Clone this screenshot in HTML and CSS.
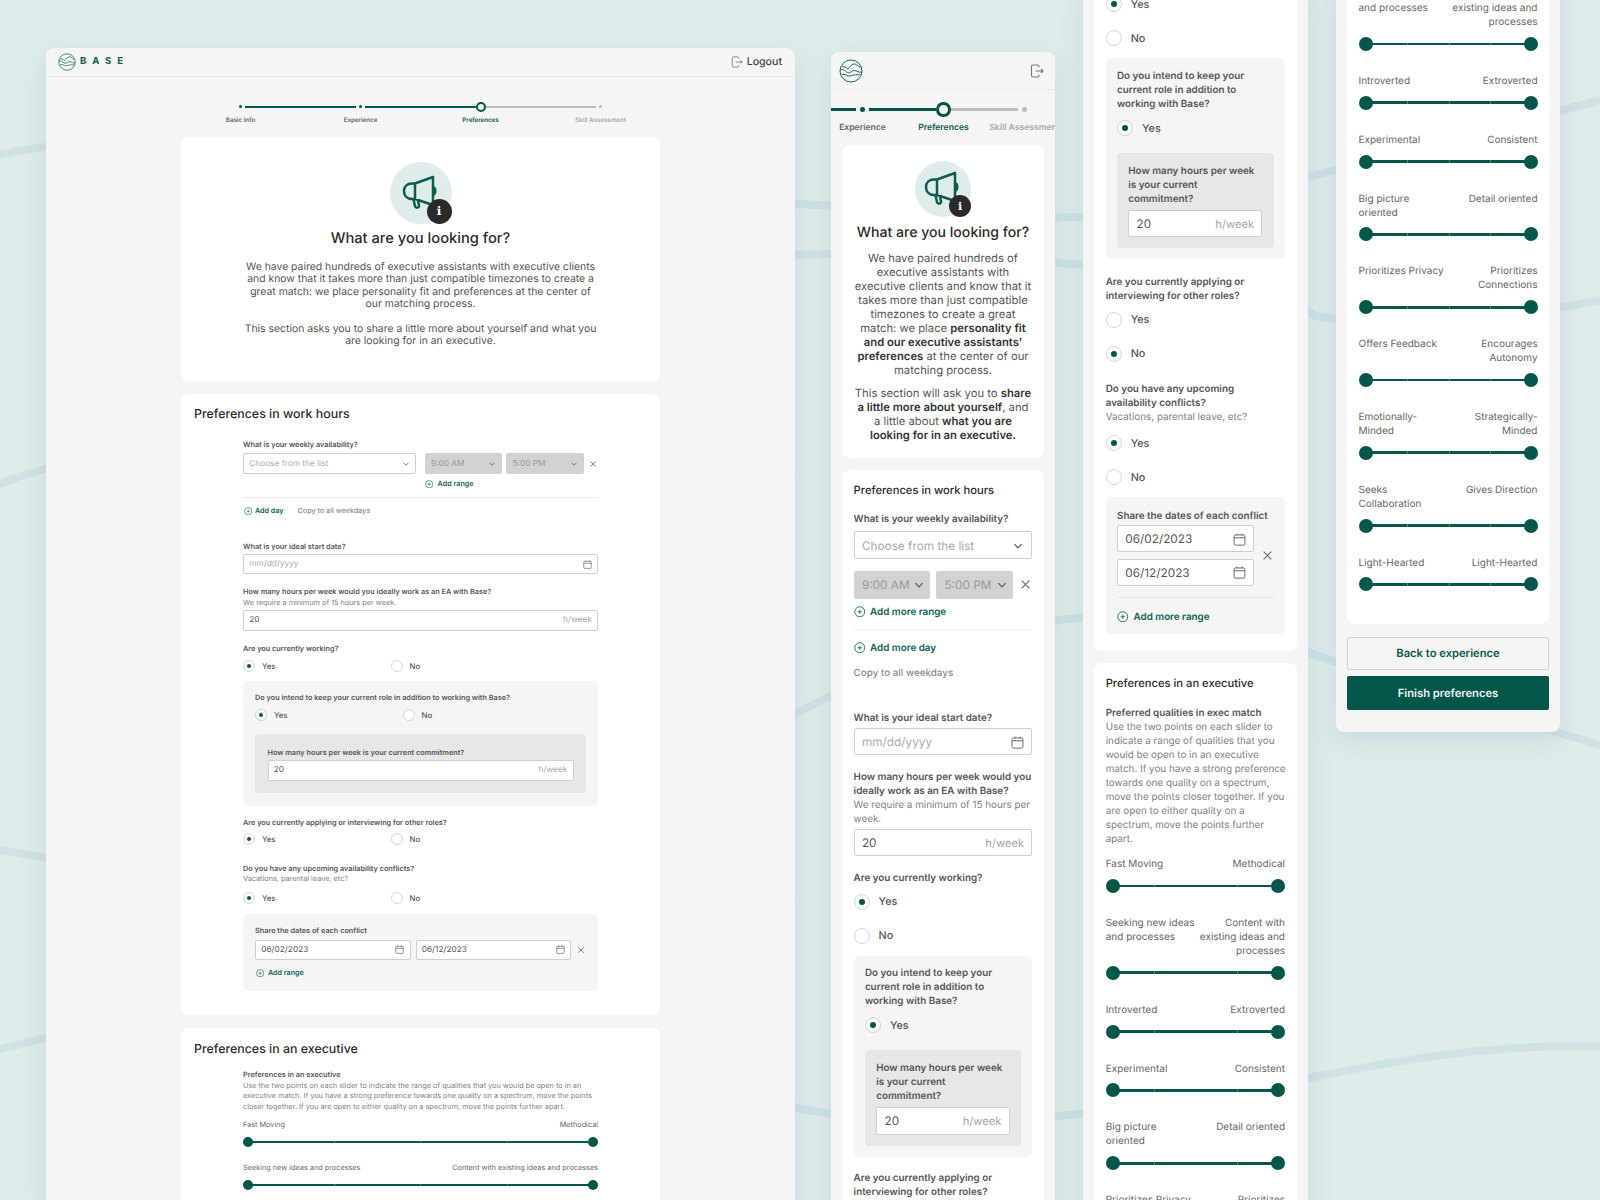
FILE: index.html
```html
<!DOCTYPE html>
<html lang="en">
<head>
<meta charset="utf-8">
<title>Base – Preferences</title>
<link rel="stylesheet" href="styles.css">
</head>
<body>
<svg class="sprite" xmlns="http://www.w3.org/2000/svg">
  <symbol id="i-chev" viewBox="0 0 10 10"><path d="M2 3.5 5 6.5 8 3.5"/></symbol>
  <symbol id="i-x" viewBox="0 0 10 10"><path d="M1.5 1.5 8.500 8.500M8.500 1.500 1.500 8.500"/></symbol>
  <symbol id="i-cal" viewBox="0 0 12 12"><rect x="1" y="1.800" width="10" height="9.400" rx="1.300"/><path d="M1 4.400H11M3.500.6V2M8.500.6V2"/></symbol>
  <symbol id="i-add" viewBox="0 0 12 12"><circle cx="6" cy="6" r="5.200"/><path d="M6 3.800V8.200M3.800 6H8.200"/></symbol>
  <symbol id="i-out" viewBox="0 0 14 14"><path d="M9 3.200V2.500A1.500 1.500 0 0 0 7.500 1H3A1.500 1.500 0 0 0 1.500 2.500V11.500A1.500 1.500 0 0 0 3 13H7.500A1.500 1.500 0 0 0 9 11.500V10.800M5.500 7H13M11 5 13 7 11 9"/></symbol>
  <symbol id="i-logo" viewBox="0 0 24 24"><circle cx="12" cy="12" r="11"/><path d="M3 8C6 7 7.500 9 9 10C11 8 13 4.500 16 5C18 5.500 19 7.500 21.500 8.500M1.300 11C4 9.500 6 12 8.500 13.500C11 15 12.500 11.500 15 11.500C18 11.500 20 14 22.700 13M2.500 16C6 14 8 17.500 11 17C14 16.500 16 15 21.500 16"/></symbol>
  <symbol id="i-horn" viewBox="0 0 62 62"><path d="M25 21.500 43 15V43L25 37H22C17 37 14 33.500 14 29S17 21.500 22 21.500ZM25 21.500V37M23.500 37.500 25 44C25.500 46.500 29.500 46 29 43.500L28 38.500M43 25C46 26 46 32 43 33"/></symbol>
</svg>

<div class="stage">
  <svg class="waves" viewBox="0 0 1600 1200" xmlns="http://www.w3.org/2000/svg">
    <path d="M-10 157C300 90 600 195 795 204C900 208 980 220 1083 217C1200 210 1300 180 1600 100"/>
    <path d="M795 255C900 250 1000 258 1083 265C1200 275 1300 300 1315 316C1400 330 1500 320 1600 300"/>
    <path d="M-10 488C100 440 300 420 795 480"/>
    <path d="M-10 848 46 858C300 960 600 960 795 900"/>
    <path d="M-10 1052C40 1040 200 990 400 1000"/>
    <path d="M780 722C840 690 960 625 1083 618C1180 614 1260 635 1336 662C1420 695 1500 715 1610 748"/>
    <path d="M780 1105C900 1130 1050 1130 1308 1078C1400 1060 1500 1042 1610 1047"/>
  </svg>

  <section class="window win1 lg">
    <header class="topbar">
      <div class="brand"><svg class="ic logo"><use href="#i-logo"/></svg><span class="wordmark">BASE</span></div>
      <div class="logout"><svg class="ic"><use href="#i-out"/></svg>Logout</div>
    </header>
    <div class="steps">
      <div class="step done"><div class="rail"><i class="seg none"></i><i class="pt"></i><i class="seg on"></i></div><span>Basic Info</span></div>
      <div class="step done"><div class="rail"><i class="seg on"></i><i class="pt"></i><i class="seg on"></i></div><span>Experience</span></div>
      <div class="step now"><div class="rail"><i class="seg on"></i><i class="pt"></i><i class="seg off"></i></div><span>Preferences</span></div>
      <div class="step todo"><div class="rail"><i class="seg off"></i><i class="pt"></i><i class="seg none"></i></div><span>Skill Assessment</span></div>
    </div>

    <div class="card intro">
      <div class="horn"><svg class="ic"><use href="#i-horn"/></svg><b class="badge">i</b></div>
      <h1>What are you looking for?</h1>
      <p>We have paired hundreds of executive assistants with executive clients and know that it takes more than just compatible timezones to create a great match: we place personality fit and preferences at the center of our matching process.</p>
      <p class="para2">This section asks you to share a little more about yourself and what you are looking for in an executive.</p>
    </div>

    <div class="card work">
      <h2>Preferences in work hours</h2>
      <div class="form">
        <div class="label t18">What is your weekly availability?</div>
        <div class="avail t3">
          <div class="ctl muted pick">Choose from the list<svg class="ic"><use href="#i-chev"/></svg></div>
          <div class="ctl time">9:00 AM<svg class="ic"><use href="#i-chev"/></svg></div>
          <div class="ctl time">5:00 PM<svg class="ic"><use href="#i-chev"/></svg></div>
          <svg class="ic close"><use href="#i-x"/></svg>
        </div>
        <div class="action t5 under-time"><svg class="ic"><use href="#i-add"/></svg>Add range</div>
        <div class="rule t8"></div>
        <div class="inline t8">
          <div class="action"><svg class="ic"><use href="#i-add"/></svg>Add day</div>
          <div class="copy">Copy to all weekdays</div>
        </div>
        <div class="label t25">What is your ideal start date?</div>
        <div class="ctl muted t2">mm/dd/yyyy<svg class="ic cal"><use href="#i-cal"/></svg></div>
        <div class="label t13">How many hours per week would you ideally work as an EA with Base?<div class="sub">We require a minimum of 15 hours per week.</div></div>
        <div class="ctl t2">20<span class="unit">h/week</span></div>
        <div class="label t13">Are you currently working?</div>
        <div class="radios t5h">
          <div class="radio"><i class="mark on"></i>Yes</div>
          <div class="radio"><i class="mark"></i>No</div>
        </div>
        <div class="panel t9h">
          <div class="label">Do you intend to keep your current role in addition to working with Base?</div>
          <div class="radios t5h">
            <div class="radio"><i class="mark on"></i>Yes</div>
            <div class="radio"><i class="mark"></i>No</div>
          </div>
          <div class="inner t13">
            <div class="label">How many hours per week is your current commitment?</div>
            <div class="ctl t2">20<span class="unit">h/week</span></div>
          </div>
        </div>
        <div class="label t12h">Are you currently applying or interviewing for other roles?</div>
        <div class="radios t5">
          <div class="radio"><i class="mark on"></i>Yes</div>
          <div class="radio"><i class="mark"></i>No</div>
        </div>
        <div class="label t18h">Do you have any upcoming availability conflicts?<div class="sub">Vacations, parental leave, etc?</div></div>
        <div class="radios t7h">
          <div class="radio"><i class="mark on"></i>Yes</div>
          <div class="radio"><i class="mark"></i>No</div>
        </div>
        <div class="panel t9h">
          <div class="label">Share the dates of each conflict</div>
          <div class="dates t3">
            <div class="ctl">06/02/2023<svg class="ic cal"><use href="#i-cal"/></svg></div>
            <div class="ctl">06/12/2023<svg class="ic cal"><use href="#i-cal"/></svg></div>
            <svg class="ic close"><use href="#i-x"/></svg>
          </div>
          <div class="action t8h"><svg class="ic"><use href="#i-add"/></svg>Add range</div>
        </div>
      </div>
    </div>

    <div class="card exec">
      <h2>Preferences in an executive</h2>
      <div class="form">
        <div class="label t13">Preferences in an executive<div class="sub">Use the two points on each slider to indicate the range of qualities that you would be open to in an executive match. If you have a strong preference towards one quality on a spectrum, move the points closer together. If you are open to either quality on a spectrum, move the points further apart.</div></div>
        <div class="scale first">
          <div class="ends"><span>Fast Moving</span><span>Methodical</span></div>
          <div class="slider"><i class="thumb"></i><i class="track"></i><i class="thumb"></i></div>
        </div>
        <div class="scale">
          <div class="ends"><span>Seeking new ideas and processes</span><span>Content with existing ideas and processes</span></div>
          <div class="slider"><i class="thumb"></i><i class="track"></i><i class="thumb"></i></div>
        </div>
      </div>
    </div>
  </section>

  <section class="window win2 sm">
    <header class="topbar">
      <svg class="ic logo"><use href="#i-logo"/></svg>
      <svg class="ic exit"><use href="#i-out"/></svg>
    </header>
    <div class="steps">
      <div class="step done"><div class="rail"><i class="seg none"></i><i class="pt"></i><i class="seg on"></i></div><span>Basic Info</span></div>
      <div class="step done"><div class="rail"><i class="seg on"></i><i class="pt"></i><i class="seg on"></i></div><span>Experience</span></div>
      <div class="step now"><div class="rail"><i class="seg on"></i><i class="pt"></i><i class="seg off"></i></div><span>Preferences</span></div>
      <div class="step todo"><div class="rail"><i class="seg off"></i><i class="pt"></i><i class="seg none"></i></div><span>Skill Assessment</span></div>
    </div>
    <div class="card intro">
      <div class="horn"><svg class="ic"><use href="#i-horn"/></svg><b class="badge">i</b></div>
      <h1>What are you looking for?</h1>
      <p>We have paired hundreds of<br>executive assistants with<br>executive clients and know that it<br>takes more than just compatible<br>timezones to create a great<br>match: we place <b>personality fit<br>and our executive assistants’<br>preferences</b> at the center of our<br>matching process.</p>
      <p class="para2">This section will ask you to <b>share<br>a little more about yourself</b>, and<br>a little about <b>what you are<br>looking for in an executive.</b></p>
    </div>
    <div class="card work">
      <h2>Preferences in work hours</h2>
      <div class="label t14">What is your weekly availability?</div>
      <div class="ctl muted t5h">Choose from the list<svg class="ic"><use href="#i-chev"/></svg></div>
      <div class="times t12h">
        <div class="ctl time">9:00 AM<svg class="ic"><use href="#i-chev"/></svg></div>
        <div class="ctl time">5:00 PM<svg class="ic"><use href="#i-chev"/></svg></div>
        <svg class="ic close"><use href="#i-x"/></svg>
      </div>
      <div class="action t6"><svg class="ic"><use href="#i-add"/></svg>Add more range</div>
      <div class="rule t10"></div>
      <div class="action t11h"><svg class="ic"><use href="#i-add"/></svg>Add more day</div>
      <div class="copy t11">Copy to all weekdays</div>
      <div class="label t31">What is your ideal start date?</div>
      <div class="ctl muted t3">mm/dd/yyyy<svg class="ic cal"><use href="#i-cal"/></svg></div>
      <div class="label t14h">How many hours per week would you<br>ideally work as an EA with Base?<div class="sub">We require a minimum of 15 hours per<br>week.</div></div>
      <div class="ctl t3">20<span class="unit">h/week</span></div>
      <div class="label t14h">Are you currently working?</div>
      <div class="radios t9">
        <div class="radio"><i class="mark on"></i>Yes</div>
        <div class="radio"><i class="mark"></i>No</div>
      </div>
      <div class="panel t12">
        <div class="label">Do you intend to keep your<br>current role in addition to<br>working with Base?</div>
        <div class="radios t9"><div class="radio"><i class="mark on"></i>Yes</div></div>
        <div class="inner t17">
          <div class="label">How many hours per week<br>is your current<br>commitment?</div>
          <div class="ctl t4">20<span class="unit">h/week</span></div>
        </div>
      </div>
      <div class="label t14h">Are you currently applying or<br>interviewing for other roles?</div>
    </div>
  </section>

  <section class="window win3 sm">
    <div class="card work head-less">
      <div class="radios">
        <div class="radio"><i class="mark on"></i>Yes</div>
        <div class="radio"><i class="mark"></i>No</div>
      </div>
      <div class="panel t12">
        <div class="label">Do you intend to keep your<br>current role in addition to<br>working with Base?</div>
        <div class="radios t9"><div class="radio"><i class="mark on"></i>Yes</div></div>
        <div class="inner t17">
          <div class="label">How many hours per week<br>is your current<br>commitment?</div>
          <div class="ctl t4">20<span class="unit">h/week</span></div>
        </div>
      </div>
      <div class="label t16">Are you currently applying or<br>interviewing for other roles?</div>
      <div class="radios t8h">
        <div class="radio"><i class="mark"></i>Yes</div>
        <div class="radio"><i class="mark on"></i>No</div>
      </div>
      <div class="label t20">Do you have any upcoming<br>availability conflicts?<div class="sub">Vacations, parental leave, etc?</div></div>
      <div class="radios t11h">
        <div class="radio"><i class="mark on"></i>Yes</div>
        <div class="radio"><i class="mark"></i>No</div>
      </div>
      <div class="panel t12 dates-panel">
        <div class="label">Share the dates of each conflict</div>
        <div class="dates t2h">
          <div class="stack">
            <div class="ctl">06/02/2023<svg class="ic cal"><use href="#i-cal"/></svg></div>
            <div class="ctl">06/12/2023<svg class="ic cal"><use href="#i-cal"/></svg></div>
          </div>
          <svg class="ic close"><use href="#i-x"/></svg>
        </div>
        <div class="rule t11"></div>
        <div class="action t11h"><svg class="ic"><use href="#i-add"/></svg>Add more range</div>
      </div>
    </div>
    <div class="card exec">
      <h2>Preferences in an executive</h2>
      <div class="label t15">Preferred qualities in exec match<div class="sub">Use the two points on each slider to<br>indicate a range of qualities that you<br>would be open to in an executive<br>match. If you have a strong preference<br>towards one quality on a spectrum,<br>move the points closer together. If you<br>are open to either quality on a<br>spectrum, move the points further<br>apart.</div></div>
      <div class="scale first">
        <div class="ends"><span>Fast Moving</span><span>Methodical</span></div>
        <div class="slider"><i class="thumb"></i><i class="track"></i><i class="thumb"></i></div>
      </div>
      <div class="scale">
        <div class="ends"><span>Seeking new ideas<br>and processes</span><span>Content with<br>existing ideas and<br>processes</span></div>
        <div class="slider"><i class="thumb"></i><i class="track"></i><i class="thumb"></i></div>
      </div>
      <div class="scale">
        <div class="ends"><span>Introverted</span><span>Extroverted</span></div>
        <div class="slider"><i class="thumb"></i><i class="track"></i><i class="thumb"></i></div>
      </div>
      <div class="scale">
        <div class="ends"><span>Experimental</span><span>Consistent</span></div>
        <div class="slider"><i class="thumb"></i><i class="track"></i><i class="thumb"></i></div>
      </div>
      <div class="scale">
        <div class="ends"><span>Big picture<br>oriented</span><span>Detail oriented</span></div>
        <div class="slider"><i class="thumb"></i><i class="track"></i><i class="thumb"></i></div>
      </div>
      <div class="scale">
        <div class="ends"><span>Prioritizes Privacy</span><span>Prioritizes<br>Connections</span></div>
      </div>
    </div>
  </section>

  <section class="window win4 sm">
    <div class="card exec head-less">
      <div class="scale none-top">
        <div class="ends"><span>Seeking new ideas<br>and processes</span><span>Content with<br>existing ideas and<br>processes</span></div>
        <div class="slider"><i class="thumb"></i><i class="track"></i><i class="thumb"></i></div>
      </div>
      <div class="scale">
        <div class="ends"><span>Introverted</span><span>Extroverted</span></div>
        <div class="slider"><i class="thumb"></i><i class="track"></i><i class="thumb"></i></div>
      </div>
      <div class="scale">
        <div class="ends"><span>Experimental</span><span>Consistent</span></div>
        <div class="slider"><i class="thumb"></i><i class="track"></i><i class="thumb"></i></div>
      </div>
      <div class="scale">
        <div class="ends"><span>Big picture<br>oriented</span><span>Detail oriented</span></div>
        <div class="slider"><i class="thumb"></i><i class="track"></i><i class="thumb"></i></div>
      </div>
      <div class="scale">
        <div class="ends"><span>Prioritizes Privacy</span><span>Prioritizes<br>Connections</span></div>
        <div class="slider"><i class="thumb"></i><i class="track"></i><i class="thumb"></i></div>
      </div>
      <div class="scale">
        <div class="ends"><span>Offers Feedback</span><span>Encourages<br>Autonomy</span></div>
        <div class="slider"><i class="thumb"></i><i class="track"></i><i class="thumb"></i></div>
      </div>
      <div class="scale">
        <div class="ends"><span>Emotionally-<br>Minded</span><span>Strategically-<br>Minded</span></div>
        <div class="slider"><i class="thumb"></i><i class="track"></i><i class="thumb"></i></div>
      </div>
      <div class="scale">
        <div class="ends"><span>Seeks<br>Collaboration</span><span>Gives Direction</span></div>
        <div class="slider"><i class="thumb"></i><i class="track"></i><i class="thumb"></i></div>
      </div>
      <div class="scale">
        <div class="ends"><span>Light-Hearted</span><span>Light-Hearted</span></div>
        <div class="slider"><i class="thumb"></i><i class="track"></i><i class="thumb"></i></div>
      </div>
    </div>
    <div class="buttons">
      <div class="btn ghost">Back to experience</div>
      <div class="btn solid">Finish preferences</div>
    </div>
  </section>
</div>
</body>
</html>
```
FILE: styles.css
```css
* { box-sizing: border-box; margin: 0; padding: 0; }
html, body { width: 1600px; height: 1200px; overflow: hidden; }
body { font-family: Inter, "Liberation Sans", sans-serif; color: #555; background: #dfecec; text-rendering: geometricPrecision; }
i { display: block; font-style: normal; }
.sprite { width: 0; height: 0; position: absolute; }
.ic { display: block; fill: none; stroke: currentColor; flex: none; }

.stage { position: relative; width: 1600px; height: 1200px; overflow: hidden; background: #dfecec; }
.waves { position: absolute; inset: 0; width: 1600px; height: 1200px; fill: none; stroke: #cfe3e4; stroke-width: 8; }

.window { position: absolute; background: #f5f5f5; border-radius: 8px 8px 0 0; box-shadow: 0 8px 26px rgba(80, 120, 145, .16); overflow: hidden; }
.win1 { left: 46px; top: 48px; width: 749px; height: 1160px; }
.win2 { left: 831px; top: 52px; width: 224px; height: 1160px; }
.win3 { left: 1083px; top: -20px; width: 224.7px; height: 1240px; }
.win4 { left: 1336px; top: -30px; width: 224px; border-radius: 0 0 8px 8px; }

.lg { --fs: 7.3px; --lh: 10.4px; --ctl: 20.4px; --pad: 5.2px; --mark: 12px; --dot: 4px; --thumb: 10px; --trk: 2px; --add: 8.4px; --chev: 8px; --cal: 9px; --x: 8px; --ctlfs: 8.3px; --addfs: 7.2px; --ends: 7.3px; --unit: 8.3px; }
.sm { --fs: 9.85px; --lh: 14px; --ctl: 27.3px; --pad: 7.3px; --mark: 16px; --dot: 6px; --thumb: 14px; --trk: 2.8px; --add: 11.5px; --chev: 12px; --cal: 13px; --x: 11px; --ctlfs: 11.8px; --addfs: 9.85px; --ends: 10px; --unit: 11.2px; }

/* top bar */
.topbar { display: flex; align-items: center; justify-content: space-between; border-bottom: 1px solid #ececec; }
.lg .topbar { height: 28.7px; padding: 0 13px 0 12px; }
.sm .topbar { height: 38px; padding: 0 11px 0 8px; }
.brand { display: flex; align-items: center; gap: 4px; }
.logo { color: #1a6a5c; stroke-width: 1; }
.lg .logo { width: 18px; height: 18px; }
.sm .logo { width: 24px; height: 24px; }
.wordmark { font-size: 9.5px; font-weight: 700; letter-spacing: 5.9px; color: #0f5c50; line-height: 10px; padding-top: 1px; }
.logout { display: flex; align-items: center; gap: 4px; font-size: 10.6px; font-weight: 500; color: #444; }
.logout .ic { width: 12px; height: 12px; color: #777; stroke-width: 1; }
.exit { width: 14px; height: 14px; color: #777; stroke-width: 1.100; }

/* stepper */
.steps { display: grid; grid-template-columns: repeat(4, 1fr); }
.lg .steps { width: 480px; margin: 25px auto 0; }
.sm .steps { width: 324px; margin: 12.3px 0 0 -90px; }
.step { display: flex; flex-direction: column; align-items: center; white-space: nowrap; font-weight: 600; }
.lg .step span { font-size: 6.2px; line-height: 8px; margin-top: 5.3px; }
.sm .step span { font-size: 8.6px; line-height: 11px; margin-top: 6.6px; }
.step.done span { color: #666; }
.step.now span { color: #0c5c4e; }
.step.todo span { color: #aaa; }
.rail { display: flex; align-items: center; width: 100%; }
.lg .rail { height: 10px; gap: 2.500px; }
.sm .rail { height: 14px; gap: 3.500px; }
.now .rail { gap: 0; }
.seg { flex: 1; }
.lg .seg { height: 2px; }
.sm .seg { height: 2.600px; }
.seg.on { background: #03574a; }
.seg.off { background: #bdbdbd; }
.pt { border-radius: 50%; flex: none; }
.done .pt { background: #03574a; }
.todo .pt { background: #bdbdbd; }
.lg .done .pt, .lg .todo .pt { width: 3.500px; height: 3.500px; }
.sm .done .pt, .sm .todo .pt { width: 5.500px; height: 5.500px; }
.now .pt { border-style: solid; border-color: #03574a; background: #f5f5f5; }
.lg .now .pt { width: 10px; height: 10px; border-width: 2.800px; }
.sm .now .pt { width: 14.500px; height: 14.500px; border-width: 3.800px; }

/* cards */
.card { background: #fff; border-radius: 8px; }
.lg .card { width: 479px; margin: 12px auto 0; padding: 12.500px 13px 24px; }
.lg .card.intro { margin-top: 12px; }
.lg .card.work { margin-top: 13px; }
.lg .card.exec { margin-top: 13px; padding: 13px 13px 50px; }
.win2 .card { margin: 12px 11.300px 0; padding: 12px 11.300px 17px; }
.win2 .card.intro { margin-top: 11.100px; }
.win3 .card { margin: 12px 11px 0; padding: 12px 11.700px 17px; }
.win3 .head-less { margin-top: 0; padding-top: 16.300px; }
.win4 .card { margin: 0 11px; padding: 17.200px 11.500px 33px; }
.form { margin: 0 49px; }

h1 { font-weight: 500; color: #2b2b2b; text-align: center; }
h2 { font-weight: 500; color: #2b2b2b; }
.lg h1 { font-size: 14.700px; line-height: 20px; margin-top: 4.800px; }
.sm h1 { font-size: 14.100px; line-height: 18px; margin-top: 6.700px; }
.lg h2 { font-size: 12.400px; line-height: 16px; }
.sm h2 { font-size: 11.200px; line-height: 16px; }

.intro { text-align: center; }
.lg .intro { padding: 24.700px 62px 33px; }
.win2 .intro { padding: 16.300px 8px 16px; }
.intro p { color: #555; }
.intro p b { color: #333; font-weight: 600; }
.lg .intro p { font-size: 10.420px; line-height: 12.500px; margin-top: 12.100px; }
.lg .intro p.para2 { margin-top: 12px; }
.sm .intro p { font-size: 11.250px; line-height: 14px; margin-top: 9.300px; }
.sm .intro p.para2 { margin-top: 8.700px; }
.horn { position: relative; margin: 0 auto; border-radius: 50%; background: #dfecec; color: #0c5c4e; }
.lg .horn { width: 62px; height: 62px; }
.sm .horn { width: 56px; height: 56px; }
.horn .ic { width: 62px; height: 62px; stroke-width: 2.500; stroke-linejoin: round; }
.sm .horn .ic { transform: translate(-3px, -3px); }
.badge { position: absolute; display: flex; align-items: center; justify-content: center; border-radius: 50%; background: #2a2a2a; color: #fff; font-family: "DejaVu Serif", "Liberation Serif", serif; font-weight: 700; }
.lg .badge { right: 0; bottom: 0; width: 25px; height: 25px; font-size: 12px; }
.sm .badge { right: 0; bottom: 0; width: 22px; height: 22px; font-size: 11px; }

/* form pieces */
.label { font-size: var(--fs); line-height: var(--lh); font-weight: 600; color: #555; }
.sub { font-weight: 400; color: #808080; }
.sm .sub { white-space: nowrap; }
.ctl { height: var(--ctl); display: flex; align-items: center; justify-content: space-between; padding: 0 var(--pad); background: #fff; border: 1px solid #cfcfcf; border-radius: 2px; font-size: var(--ctlfs); color: #555; white-space: nowrap; }
.sm .ctl { padding-top: 1px; }
.ctl .ic { width: var(--chev); height: var(--chev); color: #555; stroke-width: 1; }
.ctl .cal { width: var(--cal); height: var(--cal); color: #666; stroke-width: .9; }
.muted { color: #aaa; }
.unit { color: #a6a6a6; font-size: var(--unit); }
.time { background: #d2d2d2; border-color: #d2d2d2; color: #999; }
.close { width: var(--x); height: var(--x); color: #666; stroke-width: 1; }
.avail { display: flex; align-items: center; gap: 4px; }
.pick { width: 173px; margin-right: 4.700px; }
.avail .time { width: 77.700px; }
.avail .close { margin-left: 1px; }
.times { display: flex; align-items: center; gap: 6px; }
.times .time { width: 76.500px; padding-right: 4px; }
.times .close { margin-left: 1.500px; }
.action { display: flex; align-items: center; gap: 4px; font-size: var(--addfs); line-height: var(--lh); font-weight: 600; color: #0c6354; }
.action .ic { width: var(--add); height: var(--add); stroke-width: .9; margin-left: .5px; }
.sm .action { gap: 4.500px; line-height: 14px; }
.under-time { margin-left: 181.700px; }
.copy { font-size: var(--addfs); line-height: var(--lh); font-weight: 500; color: #8c8c8c; }
.inline { display: flex; align-items: center; gap: 14px; }
.inline .action { gap: 3px; }
.rule { height: 1px; background: #eee; }
.sm .panel .rule { background: #e6e6e6; }

.radios { display: flex; }
.radio { display: flex; align-items: center; font-weight: 500; color: #555; }
.lg .radio { width: 147.500px; gap: 7px; height: 12px; font-size: 7.800px; }
.sm .radios { flex-direction: column; gap: 18px; }
.sm .radio { gap: 9px; height: 16px; font-size: 10.800px; }
.mark { display: flex; align-items: center; justify-content: center; flex: none; width: var(--mark); height: var(--mark); border-radius: 50%; background: #fff; border: 1px solid #d4d4d4; }
.mark.on::after { content: ""; width: var(--dot); height: var(--dot); border-radius: 50%; background: #03574a; }

.panel { background: #f5f5f5; border-radius: 5px; }
.lg .panel { padding: 12.300px 12px 12.500px; }
.sm .panel { padding: 10.800px 11.300px 11px; }
.sm .dates-panel { padding: 11.500px 11.300px 10px; }
.inner { background: #e7e7e7; border-radius: 4px; }
.lg .inner { padding: 13.500px 12.500px 12.500px; }
.sm .inner { padding: 10.800px 11.300px 11px; }
.dates { display: flex; align-items: center; }
.lg .dates { gap: 5px; }
.lg .dates .ctl { flex: 1; }
.lg .dates .close { width: 8px; margin-left: 1px; margin-right: 1px; }
.sm .dates { gap: 8px; }
.stack { width: 137px; display: flex; flex-direction: column; gap: 6.300px; }

.scale { margin-top: 23px; }
.scale.first { margin-top: 11.700px; }
.scale.none-top { margin-top: 0; }
.lg .scale { margin-top: 16.500px; }
.lg .scale.first { margin-top: 8px; }
.ends { display: flex; justify-content: space-between; font-size: var(--ends); line-height: var(--lh); color: #666; }
.ends span:last-child { text-align: right; }
.slider { display: flex; align-items: center; margin-top: 7.800px; }
.lg .slider { margin-top: 6.500px; }
.thumb { width: var(--thumb); height: var(--thumb); border-radius: 50%; background: #03574a; flex: none; position: relative; }
.track { flex: 1; height: var(--trk); margin: 0 calc(var(--thumb) / -2); background: linear-gradient(90deg, #03574a 0 25%, #4f8a7e 25% calc(25% + 1px), #03574a 0 50%, #4f8a7e 50% calc(50% + 1px), #03574a 0 75%, #4f8a7e 75% calc(75% + 1px), #03574a 0); }

.buttons { display: flex; flex-direction: column; gap: 6px; padding: 12.500px 11px 22px; }
.btn { display: flex; align-items: center; justify-content: center; border-radius: 2px; font-size: 11.200px; font-weight: 600; }
.ghost { height: 33px; border: 1px solid #d2d2d2; color: #0c5c4e; }
.solid { height: 34px; background: #02564a; color: #eef4f2; }

/* spacing steps */
.t2 { margin-top: 2px; } .t2h { margin-top: 2.500px; } .t3 { margin-top: 3px; } .t3h { margin-top: 3.500px; }
.t4 { margin-top: 4px; } .t4h { margin-top: 4.500px; } .t5 { margin-top: 5px; } .t5h { margin-top: 5.500px; } .t6 { margin-top: 6px; } .t6h { margin-top: 6.500px; }
.t7 { margin-top: 7px; } .t7h { margin-top: 7.500px; } .t8 { margin-top: 8px; } .t8h { margin-top: 8.500px; } .t9 { margin-top: 9px; } .t9h { margin-top: 9.500px; }
.t10 { margin-top: 10px; } .t11 { margin-top: 11px; } .t11h { margin-top: 11.500px; } .t12 { margin-top: 12px; }
.t12h { margin-top: 12.500px; } .t13 { margin-top: 13px; } .t13h { margin-top: 13.500px; } .t14 { margin-top: 14px; }
.t14h { margin-top: 14.500px; } .t15 { margin-top: 15px; } .t16 { margin-top: 16px; } .t17 { margin-top: 17px; } .t17h { margin-top: 17.500px; }
.t18 { margin-top: 18px; } .t18h { margin-top: 18.500px; } .t19 { margin-top: 19px; } .t20 { margin-top: 20px; } .t25 { margin-top: 25px; } .t31 { margin-top: 31px; }
```
